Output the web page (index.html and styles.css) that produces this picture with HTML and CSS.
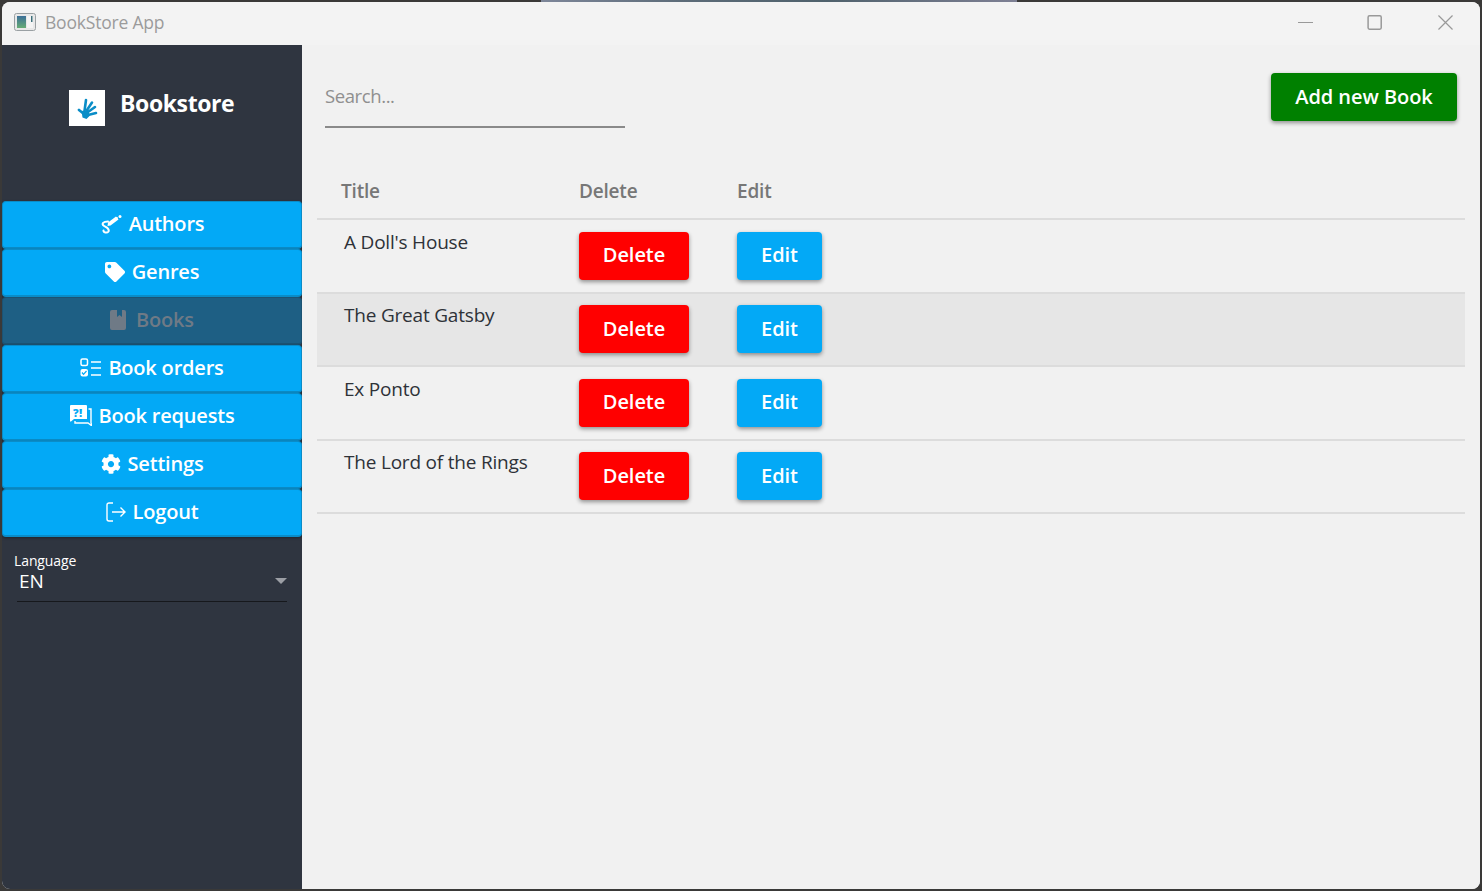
FILE: index.html
```html
<!DOCTYPE html>
<html lang="en">
<head>
<meta charset="utf-8">
<title>BookStore App</title>
<link rel="stylesheet" href="styles.css">
</head>
<body>
<div class="desktop">
  <div class="wallpaper-strip"></div>
  <div class="window">
    <header class="titlebar">
      <svg class="app-icon" viewBox="0 0 22 18"><rect x=".5" y=".5" width="21" height="17" rx="2" fill="#e8e8e8" stroke="#9aa0a3"/><defs><linearGradient id="ag" x1="0" y1="0" x2="0" y2="1"><stop offset="0" stop-color="#3c6f98"/><stop offset="1" stop-color="#66ac74"/></linearGradient></defs><rect x="3" y="3" width="9" height="12" fill="url(#ag)"/><rect x="13" y="3" width="6" height="12" fill="#f4f4f4"/><rect x="17" y="3" width="1.5" height="6" fill="#3c6f7a"/></svg>
      <span class="app-title">BookStore App</span>
      <div class="win-controls">
        <svg class="win-btn" viewBox="0 0 16 16"><path d="M0 8h16" stroke="#999" stroke-width="1.2" fill="none"/></svg>
        <svg class="win-btn" viewBox="0 0 16 16"><rect x=".1" y=".8" width="14" height="14.4" rx="1.5" stroke="#999" stroke-width="1.6" fill="none" overflow="visible"/></svg>
        <svg class="win-btn" viewBox="0 0 16 16"><path d="M.5.5l15 15M15.500.5l-15 15" stroke="#999" stroke-width="1.3" fill="none"/></svg>
      </div>
    </header>
    <div class="app">
      <aside class="sidebar">
        <div class="brand">
          <div class="logo"><svg viewBox="0 0 36 36" class="logo-hand"><g stroke="#0a8dc7" stroke-width="2.6" stroke-linecap="round" fill="none"><path d="M15.5 21L17 10"/><path d="M18 20L23 12.5"/><path d="M19 22L26 17"/><path d="M19 25L27 23"/><path d="M15 24L10 20"/></g><path d="M12.5 21l7-1 1 6-3 3-4-1.5z" fill="#0a8dc7"/></svg></div>
          <span class="brand-name">Bookstore</span>
        </div>
        <nav class="nav">
          <a class="nav-btn"><svg class="ico ico-authors" viewBox="0 0 22 20"><g fill="none" stroke="currentColor" stroke-width="2" stroke-linecap="round"><path d="M9.5 9.5L17 4"/><path d="M8 7.5C3 7.500 1.500 10 3.500 11.500S10 14 8.500 17.500C7 19.500 3 18.500 3.500 16.500"/></g><path d="M8 8.500L16 2.500l2.500 3-8 6-3 .5z" fill="currentColor"/><circle cx="20" cy="2.500" r="1.500" fill="currentColor"/></svg><span>Authors</span></a>
          <a class="nav-btn"><svg class="ico ico-tag" viewBox="0 0 512 512"><path fill="currentColor" d="M0 252.118V48C0 21.49 21.49 0 48 0h204.118a48 48 0 0 1 33.941 14.059l211.882 211.882c18.745 18.745 18.745 49.137 0 67.882L293.823 497.941c-18.745 18.745-49.137 18.745-67.882 0L14.059 286.059A48 48 0 0 1 0 252.118zM112 64c-26.51 0-48 21.49-48 48s21.49 48 48 48 48-21.49 48-48-21.49-48-48-48z"/></svg><span>Genres</span></a>
          <a class="nav-btn is-active"><svg class="ico ico-book" viewBox="0 0 16 20"><path fill="currentColor" fill-rule="evenodd" d="M2 0h12a2 2 0 0 1 2 2v16a2 2 0 0 1-2 2H2a2 2 0 0 1-2-2V2a2 2 0 0 1 2-2zM7 0v7l2.500-2L12 7V0z"/></svg><span>Books</span></a>
          <a class="nav-btn"><svg class="ico ico-orders" viewBox="0 0 21 19"><rect x="1" y="1" width="6.5" height="6.5" rx="1.5" fill="none" stroke="currentColor" stroke-width="1.5"/><rect x=".5" y="11" width="7.5" height="7.5" rx="2" fill="currentColor"/><path d="M2 14.500l1.500 1.800 3-3.300" stroke="#03a9f6" stroke-width="1.2" fill="none"/><path d="M11 4h10M11 10h10M11 17h10" stroke="currentColor" stroke-width="1.6"/></svg><span>Book orders</span></a>
          <a class="nav-btn"><svg class="ico ico-requests" viewBox="0 0 22 21"><path d="M1 0h15a1 1 0 0 1 1 1v13H4l-3 2.500H0V1a1 1 0 0 1 1-1z" fill="currentColor"/><path d="M18.500 4H21v14l1 3-4-3H5v-2" fill="none" stroke="currentColor" stroke-width="1.4"/><text x="3" y="11.5" class="ico-marks">?!</text></svg><span>Book requests</span></a>
          <a class="nav-btn"><svg class="ico ico-gear" viewBox="0 0 512 512"><path fill="currentColor" d="M487.4 315.7l-42.6-24.6c4.3-23.2 4.3-47 0-70.2l42.6-24.6c4.9-2.8 7.1-8.6 5.5-14-11.1-35.6-30-67.8-54.7-94.6-3.8-4.1-10-5.1-14.8-2.3L380.8 110c-17.9-15.4-38.5-27.3-60.8-35.1V25.8c0-5.6-3.9-10.5-9.4-11.7-36.7-8.2-74.3-7.8-109.2 0-5.5 1.2-9.4 6.1-9.4 11.7V75c-22.2 7.9-42.8 19.8-60.8 35.1L88.7 85.5c-4.9-2.8-11-1.9-14.8 2.3-24.7 26.7-43.6 58.9-54.7 94.6-1.7 5.4.6 11.2 5.5 14L67.3 221c-4.3 23.2-4.3 47 0 70.2l-42.6 24.6c-4.9 2.8-7.1 8.6-5.5 14 11.1 35.6 30 67.8 54.7 94.6 3.8 4.1 10 5.1 14.8 2.3l42.6-24.6c17.9 15.4 38.5 27.3 60.8 35.1v49.2c0 5.6 3.9 10.5 9.4 11.7 36.7 8.2 74.3 7.8 109.2 0 5.5-1.2 9.4-6.1 9.4-11.7v-49.2c22.2-7.9 42.8-19.8 60.8-35.1l42.6 24.6c4.9 2.8 11 1.9 14.8-2.3 24.7-26.7 43.6-58.9 54.7-94.6 1.5-5.5-.7-11.3-5.6-14.1zM256 336c-44.1 0-80-35.9-80-80s35.9-80 80-80 80 35.9 80 80-35.9 80-80 80z"/></svg><span>Settings</span></a>
          <a class="nav-btn"><svg class="ico ico-logout" viewBox="0 0 20 20"><path d="M7 1H3a2 2 0 0 0-2 2v14a2 2 0 0 0 2 2h4" fill="none" stroke="currentColor" stroke-width="1.4"/><path d="M6 10h13M14.500 5.500L19 10l-4.500 4.500" fill="none" stroke="currentColor" stroke-width="1.4"/></svg><span>Logout</span></a>
        </nav>
        <div class="lang">
          <div class="lang-label">Language</div>
          <div class="lang-select"><span>EN</span><span class="lang-arrow"></span></div>
        </div>
      </aside>
      <main class="content">
        <div class="toolbar">
          <div class="search">Search...</div>
          <button class="btn btn-add">Add new Book</button>
        </div>
        <div class="table">
          <div class="row head"><div class="col-title">Title</div><div class="col-del">Delete</div><div class="col-edit">Edit</div></div>
          <div class="row"><div class="col-title">A Doll's House</div><div class="col-del"><button class="btn btn-del">Delete</button></div><div class="col-edit"><button class="btn btn-edit">Edit</button></div></div>
          <div class="row is-hover"><div class="col-title">The Great Gatsby</div><div class="col-del"><button class="btn btn-del">Delete</button></div><div class="col-edit"><button class="btn btn-edit">Edit</button></div></div>
          <div class="row"><div class="col-title">Ex Ponto</div><div class="col-del"><button class="btn btn-del">Delete</button></div><div class="col-edit"><button class="btn btn-edit">Edit</button></div></div>
          <div class="row"><div class="col-title">The Lord of the Rings</div><div class="col-del"><button class="btn btn-del">Delete</button></div><div class="col-edit"><button class="btn btn-edit">Edit</button></div></div>
        </div>
      </main>
    </div>
  </div>
</div>
</body>
</html>
```
FILE: styles.css
```css
* { box-sizing: border-box; }
html, body { margin: 0; height: 100%; overflow: hidden; }
body { font-family: "Open Sans", "Noto Sans", sans-serif; background: #3a3938; }
.desktop { height: 891px; display: flex; flex-direction: column; padding: 0 2px 2px; }
.wallpaper-strip { height: 2px; flex: none; width: 476px; margin-left: 539px; background: linear-gradient(90deg, #7d8699, #5c6b78 30%, #4f616c 60%, #7e8094); }
.window { flex: 1; min-height: 0; display: flex; flex-direction: column; background: #f3f3f3; border-radius: 8px; overflow: hidden; }

.titlebar { height: 43px; flex: none; display: flex; align-items: center; padding: 0 0 4px 12px; background: #f3f3f3; }
.app-icon { width: 22px; height: 18px; margin-right: 9px; }
.app-title { color: #9b9b9b; font-size: 17.5px; letter-spacing: -.2px; }
.win-controls { margin-left: auto; display: flex; gap: 55px; padding: 2px 27px 0 0; }
.win-btn { width: 15px; height: 15px; display: block; overflow: visible; }

.app { flex: 1; min-height: 0; display: flex; }
.sidebar { width: 300px; flex: none; background: #2f3540; color: #fff; }
.brand { height: 156px; display: flex; align-items: flex-start; padding: 45px 0 0 67px; }
.logo { width: 36px; height: 36px; background: #fff; }
.logo-hand { display: block; width: 36px; height: 36px; }
.brand-name { margin: 0 0 0 15px; font-size: 23px; font-weight: 700; line-height: 26px; letter-spacing: -.4px; }

.nav { display: flex; flex-direction: column; }
.nav-btn { height: 48px; display: flex; align-items: center; justify-content: center; gap: 7px; padding-bottom: 2px; background: #03a9f6; border: 1px solid #0a8cc8; border-bottom-width: 2px; border-radius: 4px; color: #fff; font-size: 20px; font-weight: 600; letter-spacing: -.2px; box-shadow: 0 1px 3px rgba(0,0,0,.35); }
.nav-btn.is-active { background: #1e5f84; border-color: #1c5373; color: #6f7a86; box-shadow: none; }
.ico { display: block; flex: none; }
.ico-authors { width: 22px; height: 20px; }
.ico-tag { width: 20px; height: 20px; }
.ico-book { width: 16px; height: 20px; margin-right: 3px; }
.ico-orders { width: 21px; height: 19px; }
.ico-requests { width: 22px; height: 21px; }
.ico-gear { width: 20px; height: 20px; }
.ico-logout { width: 20px; height: 20px; }
.ico-marks { font-size: 11px; font-weight: 800; fill: #03a9f6; letter-spacing: .5px; }

.lang { padding: 16px 15px 0 12px; }
.lang-label { font-size: 14px; line-height: 16px; letter-spacing: -.1px; }
.lang-select { margin: 0 0 0 3px; height: 33px; display: flex; align-items: flex-start; justify-content: space-between; border-bottom: 1.5px solid #16181c; font-size: 19px; line-height: 24px; padding: 0 0 0 2px; }
.lang-arrow { width: 0; height: 0; margin: 9px 0 0; border-left: 6px solid transparent; border-right: 6px solid transparent; border-top: 6px solid #9c9fa5; }

.content { flex: 1; min-width: 0; background: #f1f1f1; padding: 0 15px; }
.toolbar { height: 98px; display: flex; align-items: flex-start; justify-content: space-between; padding: 28px 8px 0 8px; }
.search { width: 300px; height: 55px; border-bottom: 2px solid #8a8a8a; color: #8f8f8f; font-size: 18.5px; line-height: 46px; letter-spacing: -.4px; }
.btn { border: 0; border-radius: 4px; color: #fff; font-family: inherit; font-size: 20px; font-weight: 600; letter-spacing: -.05px; height: 48px; padding: 0 0 2px; display: block; box-shadow: 0 2px 4px rgba(0,0,0,.4); }
.btn-add { width: 186px; background: #008000; }
.btn-del { width: 110px; background: #ff0000; }
.btn-edit { width: 85px; background: #03a9f6; }

.row { display: flex; height: 73.5px; border-bottom: 2px solid #dcdcdc; padding-top: 11.5px; color: #2e3238; font-size: 19px; letter-spacing: -.2px; line-height: 21px; }
.row.head { height: 77px; padding-top: 37px; color: #777; font-weight: 600; line-height: 22px; }
.row.is-hover { background: #e6e6e6; }
.col-title { width: 262px; padding-left: 27px; flex: none; }
.head .col-title { padding-left: 24px; }
.col-del { width: 158px; flex: none; }
.col-edit { width: 85px; flex: none; }
```
